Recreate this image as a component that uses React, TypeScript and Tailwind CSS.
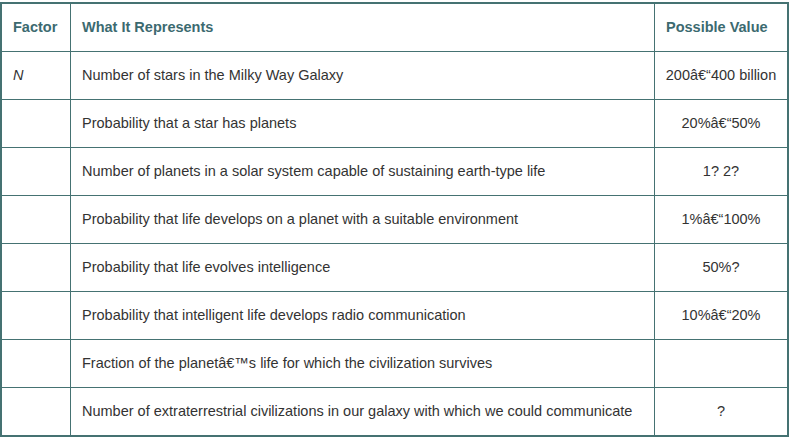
const rows: [string, string, string][] = [
  ["N", "Number of stars in the Milky Way Galaxy", "200â€“400 billion"],
  ["", "Probability that a star has planets", "20%â€“50%"],
  ["", "Number of planets in a solar system capable of sustaining earth-type life", "1? 2?"],
  ["", "Probability that life develops on a planet with a suitable environment", "1%â€“100%"],
  ["", "Probability that life evolves intelligence", "50%?"],
  ["", "Probability that intelligent life develops radio communication", "10%â€“20%"],
  ["", "Fraction of the planetâ€™s life for which the civilization survives", ""],
  ["", "Number of extraterrestrial civilizations in our galaxy with which we could communicate", "?"],
];

export default function App() {
  return (
    <div className="w-[793px] h-[441px] bg-white pt-[2px] font-['Liberation_Sans',Arial,sans-serif]">
      <div className="w-[789px] border-2 border-[#457272] grid grid-cols-[69px_584px_1fr]">
        <div className="h-[48px] border-r border-b border-[#457272] flex items-center pl-[11px] pt-[1px] text-[14.5px] font-bold text-[#3c6a70]">
          Factor
        </div>
        <div className="h-[48px] border-r border-b border-[#457272] flex items-center pl-[11px] pt-[1px] text-[14.5px] font-bold text-[#3c6a70]">
          What It Represents
        </div>
        <div className="h-[48px] border-b border-[#457272] flex items-center pl-[11px] pt-[1px] text-[14.5px] font-bold text-[#3c6a70]">
          Possible Value
        </div>
        {rows.map(([f, what, value], i) => {
          const last = i === rows.length - 1;
          const line = last ? "h-[47px]" : "h-[48px] border-b";
          return (
            <div key={i} className="contents">
              <div className={`${line} border-r border-[#457272] flex items-center pl-[11px] pt-[1px] text-[14.5px] italic text-[#333]`}>
                {f}
              </div>
              <div className={`${line} border-r border-[#457272] flex items-center pl-[11px] pt-[1px] text-[14.5px] text-[#333]`}>
                {what}
              </div>
              <div className={`${line} border-[#457272] flex items-center justify-center pt-[1px] text-[14.5px] text-[#333]`}>
                {value}
              </div>
            </div>
          );
        })}
      </div>
    </div>
  );
}
